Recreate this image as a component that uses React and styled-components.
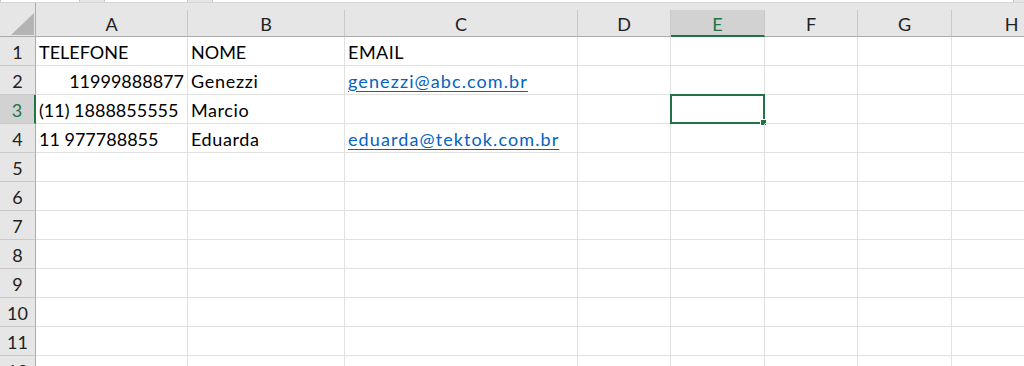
import styled, { createGlobalStyle } from 'styled-components';

const GlobalStyle = createGlobalStyle`
    html, body {
        margin: 0;
        padding: 0;
        background: #ffffff;
        overflow: hidden;
    }
    body {
        font-family: Lato, "Liberation Sans", sans-serif;
    }
`

const COLS = [
    { name: 'A', width: 152 },
    { name: 'B', width: 157 },
    { name: 'C', width: 233 },
    { name: 'D', width: 93 },
    { name: 'E', width: 94 },
    { name: 'F', width: 93 },
    { name: 'G', width: 94 },
    { name: 'H', width: 120 },
]

const ROWS = [
    [{ text: 'TELEFONE' }, { text: 'NOME' }, { text: 'EMAIL', spread: 0.5 }],
    [{ text: '11999888877', right: true }, { text: 'Genezzi', spread: 0.7 }, { text: 'genezzi@abc.com.br', link: true }],
    [{ text: '(11) 1888855555' }, { text: 'Marcio', spread: 0.6 }],
    [{ text: '11 977788855' }, { text: 'Eduarda', spread: 0.6 }, { text: 'eduarda@tektok.com.br', link: true }],
]

const ACTIVE_ROW = 3
const ACTIVE_COL = 'E'

const StyledSheet = styled.div`
    width: 1024px;
    height: 366px;
    overflow: hidden;
    background: #ffffff;
`
const StyledTopStrip = styled.div`
    display: flex;
    gap: 24px;
    height: 3px;
    background: #e6e6e6;
    border-bottom: 1px solid #d6d6d6;
    box-sizing: border-box;
`
const StyledTopBox = styled.div`
    width: ${p => p.$w}px;
    height: 2px;
    background: #ffffff;
    border-right: 1px solid #c6c6c6;
    border-left: 1px solid #c6c6c6;
`
const StyledGrid = styled.div`
    display: grid;
    grid-template-columns: 36px ${COLS.map(c => c.width + 'px').join(' ')};
    grid-auto-rows: 29px;
    grid-template-rows: 34px;
`
const StyledCorner = styled.div`
    background: #e6e6e6;
    border-right: 1px solid #ababab;
    border-bottom: 1px solid #ababab;
    display: flex;
    align-items: flex-end;
    justify-content: flex-end;
    padding: 0 1px 1px 0;
`
const StyledColHead = styled.div`
    background: #e6e6e6;
    display: flex;
    flex-direction: column;
`
const StyledColLabel = styled.div`
    flex: 1;
    margin-top: 7px;
    display: flex;
    align-items: center;
    justify-content: center;
    font-size: 18px;
    padding-top: 2px;
    color: ${p => (p.$active ? '#217346' : '#222222')};
    background: ${p => (p.$active ? '#d2d2d2' : '#e6e6e6')};
    border-right: 1px solid #c9c9c9;
    border-bottom: ${p => (p.$active ? '2px solid #217346' : '1px solid #ababab')};
`
const StyledRowHead = styled.div`
    display: flex;
    align-items: center;
    justify-content: center;
    font-size: 18px;
    padding-top: 1px;
    box-sizing: border-box;
    color: ${p => (p.$active ? '#217346' : '#222222')};
    background: ${p => (p.$active ? '#d2d2d2' : '#e6e6e6')};
    border-right: ${p => (p.$active ? '2px solid #217346' : '1px solid #ababab')};
    border-bottom: 1px solid #c9c9c9;
`
const StyledCell = styled.div`
    position: relative;
    display: flex;
    align-items: center;
    justify-content: ${p => (p.$right ? 'flex-end' : 'flex-start')};
    padding: 1px 3px 0 3px;
    font-size: 18px;
    letter-spacing: ${p => p.$spread || 0}px;
    color: #000000;
    white-space: nowrap;
    border-right: 1px solid #e1e1e1;
    border-bottom: 1px solid #e1e1e1;
    box-sizing: border-box;
    overflow: visible;
`
const StyledLink = styled.span`
    color: #0563c1;
    letter-spacing: 1.1px;
    text-decoration: underline;
    text-underline-offset: 3px;
`
const StyledSelection = styled.div`
    position: absolute;
    left: -1px;
    top: -1px;
    right: -1px;
    bottom: -1px;
    border: 2px solid #217346;
    pointer-events: none;
`
const StyledHandle = styled.div`
    position: absolute;
    right: -4px;
    bottom: -4px;
    width: 5px;
    height: 5px;
    background: #217346;
    border: 1px solid #ffffff;
`

function Corner() {
    return (
        <StyledCorner>
            <svg width="23" height="22" viewBox="0 0 23 22">
                <polygon points="0,22 23,22 23,0" fill="#b4b4b4" />
            </svg>
        </StyledCorner>
    );
}

function App() {
    const rows = [];
    for (let r = 1; r <= 12; r++) {
        const data = ROWS[r - 1] || [];
        rows.push(
            <StyledRowHead key={'rh' + r} $active={r === ACTIVE_ROW}>{r}</StyledRowHead>
        );
        COLS.forEach((col, i) => {
            const cell = data[i];
            const selected = r === ACTIVE_ROW && col.name === ACTIVE_COL;
            rows.push(
                <StyledCell key={col.name + r} $right={cell && cell.right} $spread={cell && cell.spread}>
                    {cell && (cell.link ? <StyledLink>{cell.text}</StyledLink> : cell.text)}
                    {selected && (
                        <StyledSelection>
                            <StyledHandle />
                        </StyledSelection>
                    )}
                </StyledCell>
            );
        });
    }

    return (
        <StyledSheet>
            <GlobalStyle />
            <StyledTopStrip>
                <StyledTopBox $w={78} />
                <StyledTopBox $w={82} />
                <StyledTopBox $w={800} />
            </StyledTopStrip>
            <StyledGrid>
                <Corner />
                {COLS.map(col => (
                    <StyledColHead key={col.name}>
                        <StyledColLabel $active={col.name === ACTIVE_COL}>{col.name}</StyledColLabel>
                    </StyledColHead>
                ))}
                {rows}
            </StyledGrid>
        </StyledSheet>
    );
}

export default App;
